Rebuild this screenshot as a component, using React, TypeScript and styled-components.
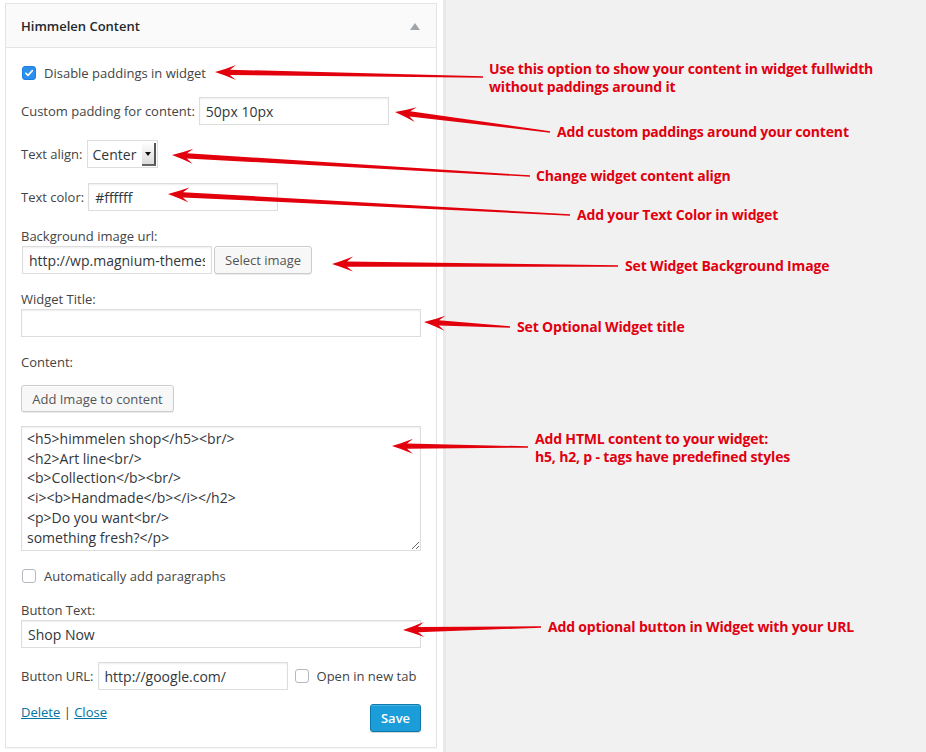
import React from "react";
import styled, { createGlobalStyle } from "styled-components";

const GlobalStyle = createGlobalStyle`
  html, body {
    margin: 0;
    padding: 0;
    background: #fff;
  }
  body {
    font-family: "Open Sans", "Liberation Sans", sans-serif;
    color: #444;
  }
`;

const Page = styled.div`
  position: relative;
  width: 926px;
  height: 752px;
  display: flex;
  overflow: hidden;
`;

const Sidebar = styled.div`
  width: 443px;
  flex-shrink: 0;
  padding: 3px 0 0 5px;
  box-sizing: border-box;
  background: #fff;
`;

const Backdrop = styled.div`
  flex: 1;
  background: #f1f1f1;
  border-left: 3px solid #e9e9e9;
`;

const Widget = styled.div`
  width: 432px;
  height: 745px;
  box-sizing: border-box;
  border: 1px solid #e5e5e5;
  box-shadow: 0 1px 1px rgba(0, 0, 0, 0.04);
  background: #fff;
`;

const Header = styled.div`
  height: 43px;
  display: flex;
  align-items: center;
  justify-content: space-between;
  padding: 0 16px 0 15px;
  background: #fafafa;
  border-bottom: 1px solid #e5e5e5;
  h3 {
    margin: 0;
    font-size: 13px;
    font-weight: 600;
    color: #23282d;
  }
`;

const Toggle = styled.span`
  width: 0;
  height: 0;
  border-left: 5px solid transparent;
  border-right: 5px solid transparent;
  border-bottom: 7px solid #a0a5aa;
  margin-top: 1px;
`;

const Body = styled.div`
  display: flex;
  flex-direction: column;
  gap: 14px;
  padding: 15px 15px 0 15px;
  font-size: 13px;
`;

const Row = styled.div<{ $loose?: boolean }>`
  display: flex;
  align-items: center;
  gap: 4px;
  margin-top: ${(p) => (p.$loose ? "1px" : "0")};
  white-space: nowrap;
`;

const Stack = styled.div<{ $loose?: boolean; $gap?: number }>`
  display: flex;
  flex-direction: column;
  align-items: flex-start;
  gap: ${(p) => p.$gap ?? 0}px;
  margin-top: ${(p) => (p.$loose ? "1px" : "0")};
`;

const Label = styled.label`
  display: block;
  line-height: 20px;
  font-size: 13px;
  color: #444;
`;

const CheckRow = styled.label<{ $loose?: boolean }>`
  display: flex;
  align-items: center;
  gap: 8px;
  height: 20px;
  padding-left: 1px;
  margin-top: ${(p) => (p.$loose ? "1px" : "0")};
  color: #444;
`;

const Box = styled.span<{ $checked?: boolean }>`
  width: 14px;
  height: 14px;
  box-sizing: border-box;
  border-radius: 3px;
  display: inline-flex;
  align-items: center;
  justify-content: center;
  background: ${(p) => (p.$checked ? "#2b8ff0" : "#fff")};
  border: 1px solid ${(p) => (p.$checked ? "#1f7fe0" : "#b4b9be")};
`;

const TextInput = styled.input<{ $full?: boolean }>`
  width: ${(p) => (p.$full ? "400px" : "190px")};
  height: 28px;
  box-sizing: border-box;
  padding: 0 6px;
  border: 1px solid #ddd;
  box-shadow: inset 0 1px 2px rgba(0, 0, 0, 0.07);
  font-family: "Open Sans", "Liberation Sans", sans-serif;
  font-size: 14px;
  color: #32373c;
  background: #fff;
  outline: none;
  border-radius: 0;
`;

const FakeSelect = styled.div`
  width: 71px;
  height: 28px;
  box-sizing: border-box;
  display: flex;
  align-items: center;
  justify-content: space-between;
  padding: 2px 1px 1px 5px;
  border: 1px solid #ddd;
  background: #fff;
  font-size: 14px;
  color: #32373c;
`;

const SelectKnob = styled.span`
  width: 14px;
  height: 23px;
  box-sizing: border-box;
  display: flex;
  align-items: center;
  justify-content: center;
  background: linear-gradient(#fdfdfd, #dcdcdc);
  border-right: 2px solid #555;
  border-bottom: 2px solid #666;
  &::after {
    content: "";
    border-left: 3px solid transparent;
    border-right: 3px solid transparent;
    border-top: 4px solid #111;
  }
`;

const Button = styled.button<{ $width: number; $height?: number }>`
  width: ${(p) => p.$width}px;
  height: ${(p) => p.$height ?? 28}px;
  box-sizing: border-box;
  padding: 0 10px;
  border: 1px solid #ccc;
  border-radius: 3px;
  background: #f7f7f7;
  box-shadow: inset 0 1px 0 #fff, 0 1px 0 rgba(0, 0, 0, 0.08);
  font-family: "Open Sans", "Liberation Sans", sans-serif;
  font-size: 13px;
  color: #555;
  white-space: nowrap;
`;

const UrlGroup = styled.div`
  display: flex;
  gap: 2px;
  padding-left: 1px;
`;

const TextArea = styled.textarea`
  width: 400px;
  height: 125px;
  box-sizing: border-box;
  padding: 2px 5px;
  border: 1px solid #ddd;
  box-shadow: inset 0 1px 2px rgba(0, 0, 0, 0.07);
  font-family: "Open Sans", "Liberation Sans", sans-serif;
  font-size: 14px;
  line-height: 19.7px;
  color: #32373c;
  resize: vertical;
  outline: none;
`;

const NewTab = styled.label`
  display: flex;
  align-items: center;
  gap: 8px;
  margin-left: 3px;
`;

const Footer = styled.div`
  display: flex;
  justify-content: space-between;
  align-items: flex-start;
  color: #444;
`;

const Links = styled.div`
  line-height: 16px;
  a {
    color: #0074a2;
    text-decoration: underline;
  }
`;

const SaveButton = styled.button`
  width: 51px;
  height: 28px;
  border: 1px solid #0c79ae;
  border-radius: 3px;
  background: #1b9dd9;
  box-shadow: inset 0 1px 0 rgba(120, 200, 230, 0.5), 0 1px 0 rgba(0, 0, 0, 0.15);
  color: #fff;
  font-family: "Open Sans", "Liberation Sans", sans-serif;
  font-size: 13px;
  font-weight: 600;
`;

const Overlay = styled.svg`
  position: absolute;
  left: 0;
  top: 0;
  pointer-events: none;
`;

const Callout = styled.div<{ $x: number; $y: number }>`
  position: absolute;
  left: ${(p) => p.$x}px;
  top: ${(p) => p.$y}px;
  font-size: 14px;
  font-weight: 700;
  line-height: 18px;
  letter-spacing: -0.17px;
  color: #e1000f;
  white-space: nowrap;
`;

function arrowPath(tx: number, ty: number, hx: number, hy: number) {
  const dx = tx - hx;
  const dy = ty - hy;
  const len = Math.hypot(dx, dy);
  const ux = dx / len;
  const uy = dy / len;
  const nx = -uy;
  const ny = ux;
  const pt = (d: number, o: number) =>
    `${(hx + ux * d + nx * o).toFixed(1)},${(hy + uy * d + ny * o).toFixed(1)}`;
  return [
    `M${pt(0, 0)}`,
    `Q${pt(10, -3)} ${pt(21, -7.5)}`,
    `L${pt(15, -2.6)}`,
    `L${pt(len, -0.7)}`,
    `L${pt(len, 0.7)}`,
    `L${pt(15, 2.6)}`,
    `L${pt(21, 7.5)}`,
    `Q${pt(10, 3)} ${pt(0, 0)}`,
    "Z",
  ].join(" ");
}

const notes = [
  { lines: ["Use this option to show your content in widget fullwidth", "without paddings around it"], x: 489, y: 60, tail: [483, 77], tip: [215, 72] },
  { lines: ["Add custom paddings around your content"], x: 557, y: 123, tail: [550, 132], tip: [395, 112] },
  { lines: ["Change widget content align"], x: 536, y: 167, tail: [530, 176], tip: [172, 155] },
  { lines: ["Add your Text Color in widget"], x: 577, y: 206, tail: [570, 215], tip: [168, 194] },
  { lines: ["Set Widget Background Image"], x: 625, y: 257, tail: [618, 266], tip: [332, 264] },
  { lines: ["Set Optional Widget title"], x: 517, y: 318, tail: [510, 327], tip: [424, 322] },
  { lines: ["Add HTML content to your widget:", "h5, h2, p - tags have predefined styles"], x: 535, y: 430, tail: [528, 447], tip: [392, 446] },
  { lines: ["Add optional button in Widget with your URL"], x: 548, y: 618, tail: [541, 627], tip: [403, 630] },
];

const content = `<h5>himmelen shop</h5><br/>
<h2>Art line<br/>
<b>Collection</b><br/>
<i><b>Handmade</b></i></h2>
<p>Do you want<br/>
something fresh?</p>`;

const Check = () => (
  <svg width="10" height="10" viewBox="0 0 10 10">
    <path d="M1.8 5.2 L4 7.4 L8.3 2.6" fill="none" stroke="#fff" strokeWidth="1.6" strokeLinecap="round" strokeLinejoin="round" />
  </svg>
);

export default function App() {
  return (
    <Page>
      <GlobalStyle />
      <Sidebar>
        <Widget>
          <Header>
            <h3>Himmelen Content</h3>
            <Toggle />
          </Header>
          <Body>
            <CheckRow>
              <Box $checked>
                <Check />
              </Box>
              Disable paddings in widget
            </CheckRow>
            <Row>
              <Label>Custom padding for content:</Label>
              <TextInput defaultValue="50px 10px" />
            </Row>
            <Row $loose>
              <Label>Text align:</Label>
              <FakeSelect>
                Center
                <SelectKnob />
              </FakeSelect>
            </Row>
            <Row $loose>
              <Label>Text color:</Label>
              <TextInput defaultValue="#ffffff" />
            </Row>
            <Stack $loose>
              <Label>Background image url:</Label>
              <UrlGroup>
                <TextInput defaultValue="http://wp.magnium-themes.com/himmelen/wp-content/uploads/bg.jpg" />
                <Button $width={98}>Select image</Button>
              </UrlGroup>
            </Stack>
            <Stack $loose>
              <Label>Widget Title:</Label>
              <TextInput $full defaultValue="" />
            </Stack>
            <Stack $loose $gap={13}>
              <Label>Content:</Label>
              <Button $width={153} $height={27}>
                Add Image to content
              </Button>
            </Stack>
            <TextArea defaultValue={content} />
            <CheckRow $loose>
              <Box />
              Automatically add paragraphs
            </CheckRow>
            <Stack>
              <Label>Button Text:</Label>
              <TextInput $full defaultValue="Shop Now" />
            </Stack>
            <Row>
              <Label>Button URL:</Label>
              <TextInput defaultValue="http://google.com/" />
              <NewTab>
                <Box />
                Open in new tab
              </NewTab>
            </Row>
            <Footer>
              <Links>
                <a href="#">Delete</a> | <a href="#">Close</a>
              </Links>
              <SaveButton>Save</SaveButton>
            </Footer>
          </Body>
        </Widget>
      </Sidebar>
      <Backdrop />
      <Overlay width="926" height="752">
        {notes.map((n, i) => (
          <path key={i} d={arrowPath(n.tail[0], n.tail[1], n.tip[0], n.tip[1])} fill="#e2000c" />
        ))}
      </Overlay>
      {notes.map((n, i) => (
        <Callout key={i} $x={n.x} $y={n.y}>
          {n.lines.map((l) => (
            <div key={l}>{l}</div>
          ))}
        </Callout>
      ))}
    </Page>
  );
}
